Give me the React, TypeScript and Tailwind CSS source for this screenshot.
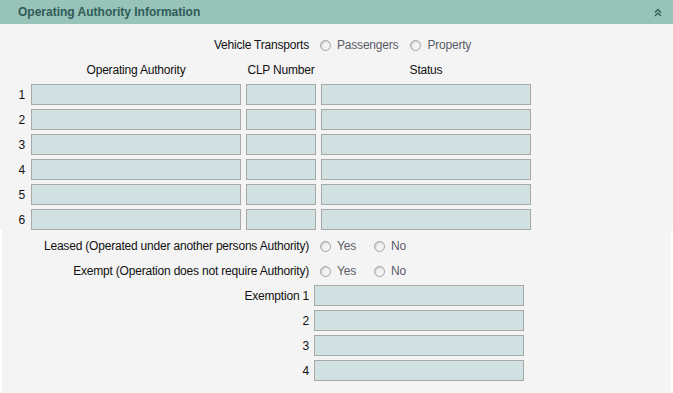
import React from "react";

const font = { fontFamily: '"Liberation Sans", Arial, sans-serif' };

function Radio({ label, className = "" }: { label: string; className?: string }) {
  return (
    <div className={`flex items-center ${className}`}>
      <span className="w-[11px] h-[11px] rounded-full border border-[#a3a3a3] bg-[#f2f2f2] shadow-[inset_1px_1px_1px_rgba(0,0,0,0.15)]" />
      <span className="ml-[6px] text-[#5b5b68]">{label}</span>
    </div>
  );
}

function Input({ className = "" }: { className?: string }) {
  return <div className={`h-[21px] bg-[#d1e0e0] border border-[#a8a8a8] ${className}`} />;
}

export default function App() {
  const rows = [1, 2, 3, 4, 5, 6];
  return (
    <div className="w-[673px] h-[393px] flex flex-col bg-white text-[12px] tracking-[-0.2px] text-[#111]" style={font}>
      <div className="h-[24px] shrink-0 bg-[#98c3b8] flex items-center justify-between pl-[18px] pr-[11px]">
        <span className="font-bold text-[#2f5c57] text-[12px] tracking-[0px]">Operating Authority Information</span>
        <svg width="8" height="9" viewBox="0 0 8 9" className="text-[#2f5c57]">
          <path d="M1 4.5 L4 1.5 L7 4.5" fill="none" stroke="currentColor" strokeWidth="1.4" />
          <path d="M1 8 L4 5 L7 8" fill="none" stroke="currentColor" strokeWidth="1.4" />
        </svg>
      </div>
      <div className="bg-[#f4f4f4] flex flex-col pt-[11px] shrink-0">
        <div className="flex items-center h-[20px]">
          <div className="w-[309px] text-right">Vehicle Transports</div>
          <Radio label="Passengers" className="ml-[11px]" />
          <Radio label="Property" className="ml-[12px]" />
        </div>
        <div className="grid grid-cols-[26px_210px_70px_210px] gap-x-[5px] gap-y-[4px] mt-[5px]">
          <div className="h-[20px]" />
          <div className="h-[20px] flex items-center justify-center">Operating Authority</div>
          <div className="h-[20px] flex items-center justify-center">CLP Number</div>
          <div className="h-[20px] flex items-center justify-center">Status</div>
          {rows.map((r) => (
            <React.Fragment key={r}>
              <div className="h-[21px] flex items-center justify-end pr-[1px]">{r}</div>
              <Input />
              <Input />
              <Input />
            </React.Fragment>
          ))}
        </div>
      </div>
      <div className="flex-1 bg-[#f4f4f4] mx-[2px] flex flex-col pt-[6px]">
        <div className="flex items-center h-[20px]">
          <div className="w-[307px] text-right">Leased (Operated under another persons Authority)</div>
          <Radio label="Yes" className="ml-[11px]" />
          <Radio label="No" className="ml-[18px]" />
        </div>
        <div className="flex items-center h-[20px] mt-[5px]">
          <div className="w-[307px] text-right">Exempt (Operation does not require Authority)</div>
          <Radio label="Yes" className="ml-[11px]" />
          <Radio label="No" className="ml-[18px]" />
        </div>
        <div className="grid grid-cols-[307px_210px] gap-x-[5px] gap-y-[4px] mt-[4px]">
          {["Exemption 1", "2", "3", "4"].map((l) => (
            <React.Fragment key={l}>
              <div className="h-[21px] flex items-center justify-end">{l}</div>
              <Input />
            </React.Fragment>
          ))}
        </div>
      </div>
    </div>
  );
}
